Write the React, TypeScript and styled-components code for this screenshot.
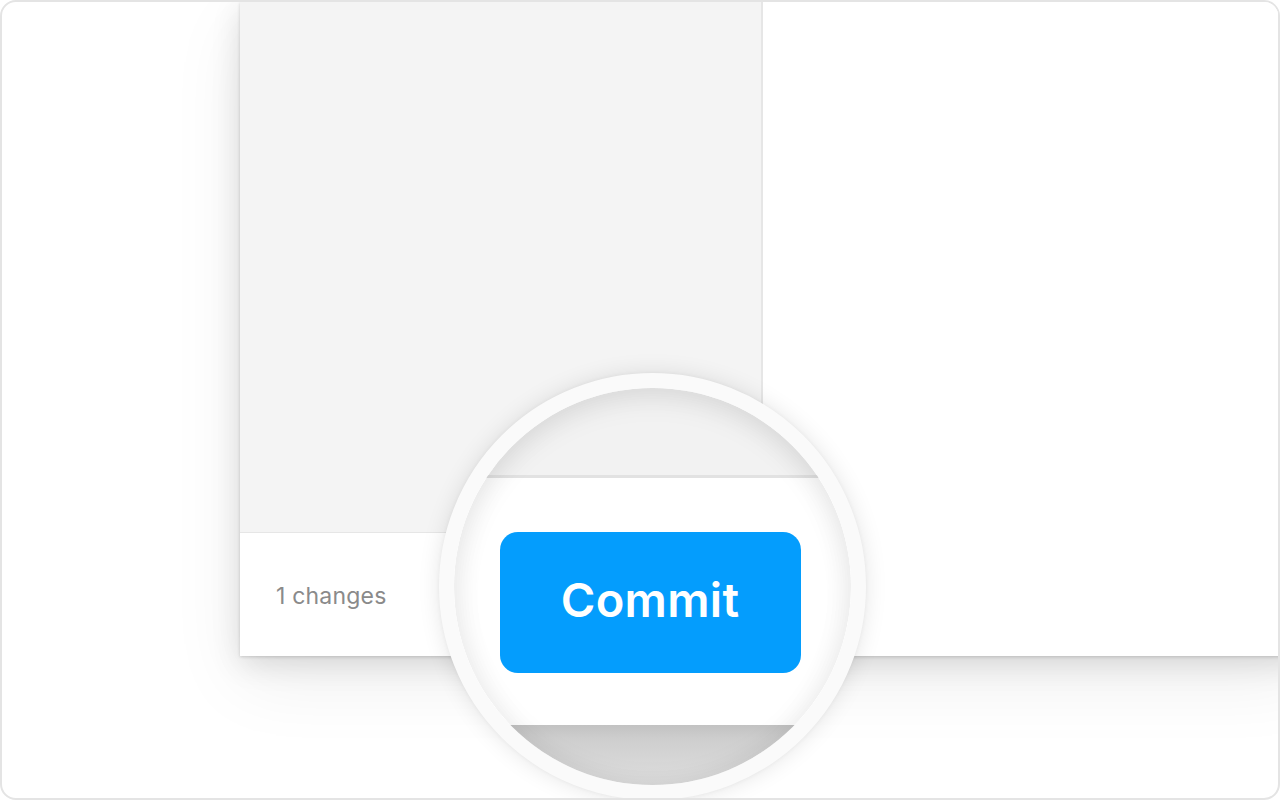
import React from "react";
import styled, { createGlobalStyle } from "styled-components";

const Global = createGlobalStyle`
  html, body { margin: 0; padding: 0; background: #ffffff; }
  * { box-sizing: border-box; }
  body { font-family: Inter, "Noto Sans", "Liberation Sans", sans-serif; }
`;

const Frame = styled.div`
  position: relative;
  width: 1280px;
  height: 800px;
  border: 2px solid #e4e4e4;
  border-radius: 16px;
  overflow: hidden;
  background: #ffffff;
`;

const Stage = styled.div`
  display: flex;
  padding-left: 238px;
  margin-right: -30px;
`;

const Window = styled.div`
  flex: 1;
  display: flex;
  height: 654px;
  background: #ffffff;
  box-shadow: 0 1px 3px rgba(0, 0, 0, 0.16), 0 8px 28px rgba(0, 0, 0, 0.12),
    0 24px 70px rgba(0, 0, 0, 0.07);
`;

const Sidebar = styled.div`
  width: 523px;
  display: flex;
  flex-direction: column;
  background: #f4f4f4;
  border-right: 2px solid #e6e6e6;
`;

const SidebarBody = styled.div`
  flex: 1;
`;

const Footer = styled.div`
  height: 124px;
  display: flex;
  align-items: center;
  padding-left: 36px;
  padding-top: 2px;
  background: #ffffff;
  border-top: 1px solid #e6e6e6;
`;

const Changes = styled.span`
  font-size: 23px;
  color: #8a8a8a;
  letter-spacing: 0.2px;
`;

const Content = styled.div`
  flex: 1;
  background: #ffffff;
`;

const Lens = styled.div`
  position: absolute;
  left: 437px;
  top: 371px;
  width: 427px;
  height: 427px;
  border-radius: 50%;
  border: 15px solid #fafafa;
  overflow: hidden;
  box-shadow: 0 0 22px rgba(0, 0, 0, 0.1), 0 0 4px rgba(0, 0, 0, 0.05);
  display: flex;
  flex-direction: column;
  background: #ffffff;

  &::after {
    content: "";
    position: absolute;
    inset: 0;
    border-radius: 50%;
    pointer-events: none;
    box-shadow: inset 0 10px 30px rgba(0, 0, 0, 0.07),
      inset 0 0 26px 4px rgba(0, 0, 0, 0.05);
  }
`;

const LensSidebar = styled.div`
  height: 90px;
  flex-shrink: 0;
  background: #f2f2f2;
  border-bottom: 3px solid #e2e2e2;
`;

const LensFooter = styled.div`
  height: 247px;
  flex-shrink: 0;
  display: flex;
  align-items: center;
  justify-content: center;
  padding-right: 5px;
  padding-top: 1px;
  background: #ffffff;
`;

const LensShadow = styled.div`
  flex: 1;
  background: linear-gradient(#c2c2c2 0px, #cecece 14px, #d8d8d8 40px, #e2e2e2 70px);
`;

const CommitButton = styled.button`
  width: 301px;
  height: 141px;
  border: none;
  border-radius: 18px;
  background: #049dfd;
  color: #ffffff;
  font-family: Inter, "Noto Sans", "Liberation Sans", sans-serif;
  font-size: 47px;
  font-weight: 600;
  letter-spacing: 0.3px;
  padding: 0 0 6px;
  cursor: pointer;
`;

export default function App() {
  return (
    <>
      <Global />
      <Frame>
        <Stage>
          <Window>
            <Sidebar>
              <SidebarBody />
              <Footer>
                <Changes>1 changes</Changes>
              </Footer>
            </Sidebar>
            <Content />
          </Window>
        </Stage>
        <Lens>
          <LensSidebar />
          <LensFooter>
            <CommitButton>Commit</CommitButton>
          </LensFooter>
          <LensShadow />
        </Lens>
      </Frame>
    </>
  );
}
